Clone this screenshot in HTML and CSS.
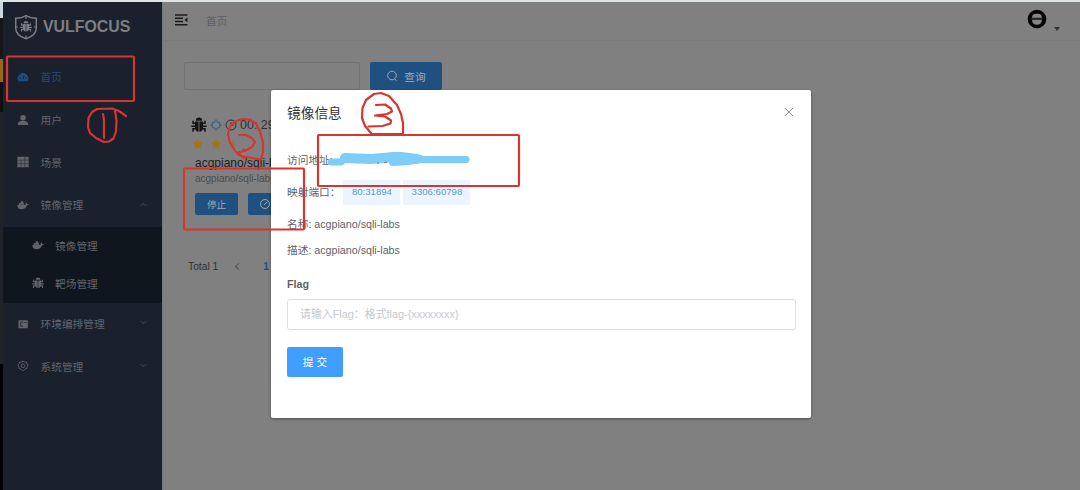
FILE: index.html
```html
<!DOCTYPE html>
<html lang="zh">
<head>
<meta charset="utf-8">
<title>VULFOCUS</title>
<link rel="stylesheet" href="styles.css">
</head>
<body>
<svg class="defs" width="0" height="0">
  <symbol id="bug" viewBox="0 0 16 16">
    <path d="M4.800 3.800a3.200 3.200 0 0 1 6.400 0z" fill="currentColor"/>
    <path d="M4 4.600h3.600v10.200c-2.200-.2-3.600-1.600-3.600-4zM8.400 4.600H12v6.200c0 2.400-1.400 3.800-3.600 4z" fill="currentColor"/>
    <path d="M4.500 6.200H2V3.800M11.500 6.200H14V3.800M4 9.200H.4M12 9.200h3.600M4.600 11.800H2v3M11.400 11.800H14v3" stroke="currentColor" stroke-width="1.500" fill="none"/>
  </symbol>
  <symbol id="whale" viewBox="0 0 16 16">
    <path d="M.5 7.500h11c0-1.500.2-2.500 1-3.200.9.800 1 1.500 1 2.300.8-.1 1.500 0 2.200.4-.6 1.200-1.500 1.500-2.600 1.500C12 12 9.500 13.500 6 13.500 2.500 13.500.5 11.500.5 7.500z" fill="currentColor"/>
    <path d="M2.500 7.600V5.200h6.800v2.400zM5 5.300V3h3.300v2.300z" fill="currentColor"/>
  </symbol>
  <symbol id="star" viewBox="0 0 12 12"><path d="M6 .7l1.600 3.500 3.900.4-2.900 2.600.8 3.900L6 9.200l-3.400 1.900.8-3.900L.5 4.600l3.900-.4z" fill="currentColor"/></symbol>
</svg>
<div class="edge"></div>
<aside class="sidebar">
  <div class="brand">
    <svg class="shield" viewBox="0 0 24 26"><path d="M12 1.500C9 3.500 5.500 4.300 1.700 4.300V14c0 5.500 4.800 9 10.300 10.700C17.500 23 22.300 19.500 22.300 14V4.300C18.500 4.300 15 3.500 12 1.500z" fill="none" stroke="currentColor" stroke-width="1.500"/><path d="M12 1v4M12 21.500V25M1 13h3M20 13h3" stroke="currentColor" stroke-width="1.200"/><use href="#bug" x="6" y="6.500" width="12" height="12"/></svg>
    <span>VULFOCUS</span>
  </div>
  <nav class="menu">
    <div class="item active"><svg viewBox="0 0 16 16"><path d="M2 13.500A7 7 0 1 1 14 13.500z" fill="currentColor"/><path d="M8 11l1.500-5M3.300 9h1.500M4.800 5l1 1M11.500 9H13" stroke="#1a202b" stroke-width="1.300"/></svg><span>首页</span></div>
    <div class="item"><svg viewBox="0 0 16 16"><circle cx="8" cy="5" r="3.700" fill="currentColor"/><path d="M1 14.500c0-4 2.500-5.500 7-5.500s7 1.500 7 5.500z" fill="currentColor"/></svg><span>用户</span></div>
    <div class="item"><svg viewBox="0 0 16 16"><path d="M.5 1h15v14H.5z" fill="currentColor"/><path d="M.5 5.500h15M5.500 5.500V15M10.500 1v14M.5 10.200h15" stroke="#1f2530" stroke-width=".7"/></svg><span>场景</span></div>
    <div class="item"><svg viewBox="0 0 16 16"><use href="#whale"/></svg><span>镜像管理</span><i class="chev up"></i></div>
    <div class="submenu">
      <div class="item"><svg viewBox="0 0 16 16"><use href="#whale"/></svg><span>镜像管理</span></div>
      <div class="item"><svg viewBox="0 0 16 16"><use href="#bug"/></svg><span>靶场管理</span></div>
    </div>
    <div class="item"><svg viewBox="0 0 16 16"><rect x="2" y="3" width="12.500" height="10.500" rx="1" fill="currentColor"/><path d="M8 5.500H5v5.500h3M10 6h2.500" fill="none" stroke="#1f2530" stroke-width="1.200"/></svg><span>环境编排管理</span><i class="chev"></i></div>
    <div class="item"><svg viewBox="0 0 16 16"><path d="M8 1.500l2 1.300 2.400-.1.900 2.300 1.500 1.800-1.200 2.100-.3 2.400-2.400.7L8.700 14H7.300l-2.200-2-2.400-.7-.3-2.400-1.200-2.100L2.700 5l.9-2.300 2.400.1z" fill="none" stroke="currentColor" stroke-width="1.200"/><circle cx="8" cy="7.800" r="2.500" fill="none" stroke="currentColor" stroke-width="1.200"/></svg><span>系统管理</span><i class="chev"></i></div>
  </nav>
</aside>
<main class="main">
  <header class="topbar">
    <svg class="fold" viewBox="0 0 13 12"><path d="M0 1h12.500M0 4.300h8M0 7.500h8M0 10.800h12.500" stroke="currentColor" stroke-width="1.500"/><path d="M12.500 3.600v4.600L9.500 5.900z" fill="currentColor"/></svg>
    <span class="crumb">首页</span>
    <svg class="avatar" viewBox="0 0 20 20"><circle cx="10" cy="10" r="9.300" fill="#050505"/><path d="M5 8.800C5.300 5.300 7 4.800 10 4.800s4.700.5 5 4zM5 10.800h10c-.2 3.200-2 5-5 5s-4.800-1.800-5-5z" fill="#858585"/><path d="M3.500 9.800h13" stroke="#444" stroke-width=".8"/></svg>
    <i class="caret"></i>
  </header>
  <section class="content">
    <div class="search"><div class="field"></div><div class="query"><svg viewBox="0 0 12 12"><circle cx="6" cy="5.500" r="4.300" fill="none" stroke="currentColor"/><path d="M8.800 9l1.600 1.700" stroke="currentColor"/></svg><span>查询</span></div></div>
    <article class="card">
      <div class="status"><svg class="bug" viewBox="0 0 16 16"><use href="#bug"/></svg><svg class="spark" viewBox="0 0 12 12"><path d="M6 .8l1.500 2.400 2.200.6-.2 1.400L11.300 6 9.600 7.200l-.3 1.500-1.800.3L6 11.200 4.500 9l-1.800-.3-.3-1.500L.7 6l1.800-.8-.2-1.400 2.200-.6z" fill="none" stroke="currentColor" stroke-width="1.200"/></svg><svg class="clock" viewBox="0 0 12 12"><circle cx="6" cy="6" r="5" fill="none" stroke="currentColor"/><path d="M6 3v3.300h2.500" fill="none" stroke="currentColor"/></svg><span>00: 29</span></div>
      <div class="stars"><svg><use href="#star"/></svg><svg><use href="#star"/></svg><svg class="half"><use href="#star"/></svg></div>
      <div class="name">acgpiano/sqli-labs</div>
      <div class="desc">acgpiano/sqli-labs</div>
      <div class="actions"><div class="btn">停止</div><div class="btn second"><svg viewBox="0 0 12 12"><circle cx="6" cy="6" r="4.500" fill="none" stroke="currentColor"/><path d="M5 7l3-3" stroke="currentColor"/></svg></div></div>
    </article>
    <div class="pager"><span>Total 1</span><i></i><b>1</b></div>
  </section>
</main>
<div class="dialog">
  <div class="head"><span>镜像信息</span><svg viewBox="0 0 10 10"><path d="M1 1l8 8M9 1L1 9" stroke="currentColor"/></svg></div>
  <div class="row address">访问地址:</div>
  <div class="row ports"><span>映射端口：</span><em>80:31894</em><em class="wide">3306:60798</em></div>
  <div class="row title">名称: acgpiano/sqli-labs</div>
  <div class="row about">描述: acgpiano/sqli-labs</div>
  <div class="label">Flag</div>
  <div class="input">请输入Flag：格式flag-{xxxxxxxx}</div>
  <div class="submit">提 交</div>
</div>
<svg class="marks" viewBox="0 0 1080 490">
  <path class="scribble" d="M331 162h10l6-5" stroke-width="7"/>
  <path class="scribble" d="M345 158l26 1 23-2h7l16 2" stroke-width="10"/>
  <path class="scribble" d="M393 162l15-1 12-2" stroke-width="8"/>
  <path class="scribble" d="M412 159.500h54" stroke-width="7"/>
  <path d="M377 162.500l2 1M384 163l2-1 1 1" fill="none" stroke="#777" stroke-width="1"/>
  <g class="pen">
    <rect x="7" y="56.500" width="127" height="44.500" rx="1"/>
    <rect x="184" y="168.500" width="120" height="61" rx="1"/>
    <rect x="318" y="135" width="201" height="51" rx="1"/>
    <path d="M126 116l-7-5-7-2.500-15 .5-5 3-3.500 6-.5 9 2 6 6 5 8 4 5-.5 4.500-3 2.500-7 .5-11-1.500-10M103 114l1 6v18"/>
    <path d="M244 158l-8-6-6-9-2-9 2-8 6-5 7-2 7 .5 6 4 4 8 3 11v10l-2 7-18-3-5-2 6-5M239 135h7l6 3 3 4-3 5-7 4-6 1"/>
    <path d="M371 133l-6-7-3-8 .5-10 3.500-8 8-6 7-1 8 3 8 9 4 9 2 9v11h-31M376 105l9-.5 6 4 1 3-5 2.500-12 1.500 10 1 6 4-.5 3-8 2.500-14 .5"/>
  </g>
</svg>
</body>
</html>
```
FILE: styles.css
```css
* { box-sizing: border-box; }
body { margin: 0; width: 1080px; height: 490px; overflow: hidden; display: flex; background: #808080; border-top: 2px solid #dfe5e5; font-family: "Liberation Sans", "Noto Sans CJK SC", sans-serif; font-size: 11px; color: #606266; position: relative; }
i, em { font-style: normal; }
svg { display: block; flex: none; }
.defs { position: absolute; }
.edge { width: 3px; background: linear-gradient(#cbd8de 0 16px, #161616 16px 57px, #9a681d 57px 80px, #111 80px 110px, #20232a 110px 362px, #000 362px); }
.sidebar { width: 159px; background: #1b212c; color: #60656c; }
.brand { height: 54px; padding: 0 0 4px 11px; display: flex; align-items: center; gap: 5px; font-size: 15.900px; font-weight: bold; color: #7b7e83; }
.shield { width: 24px; height: 26px; }
.item { height: 42.700px; padding: 0 14px 1px; display: flex; align-items: center; gap: 11.500px; font-size: 10.700px; }
.item svg { width: 12px; height: 12px; }
.item.active { color: #1d4d80; }
.submenu { background: #10161d; height: 76px; }
.submenu .item { height: 38px; padding-left: 29px; gap: 11px; }
.chev { width: 5px; height: 5px; margin: -4px 2px 0 auto; border: solid #3d434c; border-width: 0 1px 1px 0; transform: scaleY(.65) rotate(45deg); }
.chev.up { margin-top: 2px; transform: scaleY(.65) rotate(225deg); }
.main { flex: 1; background: #808080; border-left: 1px solid #777a7b; }
.topbar { height: 39px; padding: 0 20px 2px 12px; display: flex; align-items: center; border-bottom: 1px solid #7a7b7c; }
.fold { width: 13px; height: 12px; color: #1b1b1b; }
.crumb { margin-left: 18px; font-size: 10.700px; color: #5d6167; }
.avatar { width: 20px; height: 20px; margin-left: auto; margin-top: -2px; }
.caret { margin: 18px 0 0 7px; border: 3px solid transparent; border-top: 4px solid #303133; border-bottom: 0; }
.content { padding: 21px 0 0 21px; }
.search { display: flex; gap: 10px; }
.field { width: 176px; height: 28px; border: 1px solid #707274; border-radius: 2px; }
.query { width: 72px; height: 28px; border-radius: 2px; background: #205080; color: #a0a8b0; display: flex; align-items: center; justify-content: center; gap: 6px; font-size: 10.700px; }
.query svg { width: 12px; height: 12px; }
.card { padding: 26px 0 0 7px; }
.status { display: flex; align-items: center; height: 17px; font-size: 12.500px; color: #303133; white-space: pre; }
.status .bug { width: 16px; height: 16px; color: #151515; }
.spark { width: 12px; height: 12px; margin-left: 3px; color: #3c6287; }
.clock { width: 12px; height: 12px; margin: 0 3px 0 3px; }
.stars { display: flex; gap: 6px; height: 18px; align-items: center; padding: 4px 0 0 1px; color: #a17613; }
.stars svg { width: 12px; height: 12px; }
.half { clip-path: inset(0 50% 0 0); }
.name { margin-left: 4px; padding-top: 4px; font-size: 12px; line-height: 16px; color: #1c1c1d; }
.desc { margin-left: 4px; padding-top: 2px; font-size: 10px; line-height: 12px; color: #4b4d50; }
.actions { display: flex; gap: 10px; padding: 8px 0 0 4px; }
.btn { width: 43px; height: 22px; border-radius: 2px; background: #205080; color: #a0a8b0; display: flex; align-items: center; justify-content: center; font-size: 9.500px; }
.second { width: 55px; justify-content: flex-start; padding-left: 11px; }
.second svg { width: 12px; height: 12px; }
.pager { display: flex; align-items: center; padding: 46px 0 0 4px; font-size: 10.300px; color: #303133; }
.pager i { width: 5px; height: 5px; margin-left: 18px; border: solid #505254; border-width: 0 0 1px 1px; transform: rotate(45deg); }
.pager b { margin-left: 22px; color: #205080; }
.dialog { position: absolute; left: 271px; top: 88px; width: 540px; height: 328px; padding: 15px 16px; background: #fff; border-radius: 2px; box-shadow: 0 1px 3px rgba(0,0,0,.4); }
.head { display: flex; justify-content: space-between; align-items: flex-start; height: 41px; font-size: 13.700px; line-height: 18px; color: #303133; }
.head svg { width: 10px; height: 10px; color: #909399; margin: 2px 1px 0 0; }
.row { font-size: 10.700px; line-height: 26px; height: 26px; display: flex; white-space: pre; }
.address { line-height: 28px; height: 29px; }
.ports { height: 36px; align-items: center; padding-bottom: 2px; }
.ports em { height: 25px; width: 57px; line-height: 24px; text-align: center; margin-left: 3px; font-size: 9.600px; color: #559bd0; background: #ecf5ff; }
.ports em.wide { width: 67px; }
.label { font-size: 10.700px; font-weight: bold; line-height: 16px; margin-top: 13px; }
.input { width: 509px; height: 31px; margin-top: 7px; padding-left: 12px; border: 1px solid #dcdfe6; border-radius: 3px; line-height: 29px; color: #c6c9d0; font-size: 10.900px; }
.submit { width: 56px; height: 30px; margin-top: 17px; border-radius: 2px; background: #409eff; color: #fff; text-align: center; line-height: 31px; font-size: 10.700px; }
.marks { position: absolute; left: 0; top: -2px; width: 1080px; height: 490px; }
.pen { fill: none; stroke: #d73531; stroke-width: 2.200; stroke-linejoin: round; stroke-linecap: round; }
.scribble { fill: none; stroke: #7dcdf8; stroke-linecap: round; stroke-linejoin: round; }
```
